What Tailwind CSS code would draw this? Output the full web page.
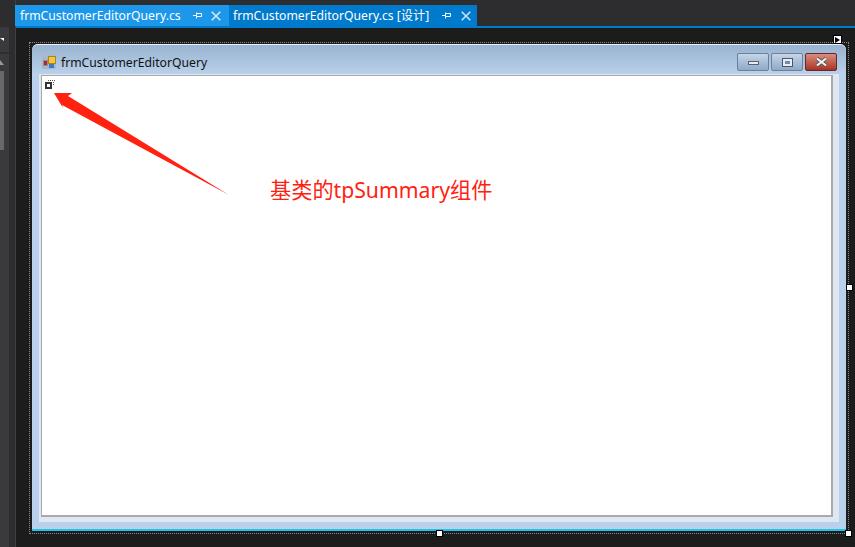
<!DOCTYPE html>
<html lang="en">
<head>
    <meta charset="UTF-8">
    <title>frmCustomerEditorQuery</title>
    <script src="https://cdn.jsdelivr.net/npm/@tailwindcss/browser@4"></script>
</head>
<body class="bg-[#1c1c1c] overflow-hidden">
    <div class="relative w-[855px] h-[547px] flex font-['Noto_Sans','Noto_Sans_CJK_SC',sans-serif]">
        <!-- left tool strip -->
        <div class="w-4 h-full flex shrink-0 border-r border-[#3f3f46] bg-[#2d2d30]">
            <div class="w-[9px] h-full bg-[#3a3a3e] flex flex-col">
                <div class="h-[27px] bg-[#2d2d30]"></div>
                <div class="h-[25px] flex items-start pt-[11px]">
                    <div class="w-0 h-0 border-t-[3px] border-t-white border-l-[4px] border-l-transparent ml-0"></div>
                </div>
                <div class="h-[2px] bg-[#2d2d30]"></div>
                <div class="h-[17px] flex items-start pt-[6px]">
                    <div class="w-0 h-0 border-b-[5px] border-b-[#999999] border-r-[4px] border-r-transparent"></div>
                </div>
                <div class="w-1 h-[79px] bg-[#686868]"></div>
            </div>
        </div>

        <div class="flex-1 flex flex-col min-w-0">
            <!-- tab well -->
            <div class="h-[28px] bg-[#2d2d30] border-b-2 border-[#007acc] flex items-end shrink-0">
                <div class="w-[214px] h-[21px] -ml-px bg-[#1c97ea] text-white text-[12.2px] leading-[21px] flex items-center pl-[5px]">
                    <span class="w-[173px] whitespace-nowrap">frmCustomerEditorQuery.cs</span>
                    <svg class="w-[9px] h-[9px]" viewBox="0 0 9 9" fill="none" stroke="#fff"><path d="M0 4.5h3M3.5 1.5v6M3.5 2.5h5v3h-5"/></svg>
                    <svg class="w-[10px] h-[10px] ml-[9px]" viewBox="0 0 10 10" fill="none" stroke="#d8ecfa" stroke-width="1.5"><path d="M.7.7l8.6 8.6M9.3.7L.7 9.3"/></svg>
                </div>
                <div class="w-[248px] h-[21px] bg-[#007acc] text-white text-[12.2px] leading-[21px] flex items-center pl-[4px]">
                    <span class="w-[209px] whitespace-nowrap">frmCustomerEditorQuery.cs [设计]</span>
                    <svg class="w-[9px] h-[9px]" viewBox="0 0 9 9" fill="none" stroke="#fff"><path d="M0 4.5h3M3.5 1.5v6M3.5 2.5h5v3h-5"/></svg>
                    <svg class="w-[10px] h-[10px] ml-[10px]" viewBox="0 0 10 10" fill="none" stroke="#cfe6f6" stroke-width="1.5"><path d="M.7.7l8.6 8.6M9.3.7L.7 9.3"/></svg>
                </div>
            </div>

            <!-- designer surface -->
            <div class="flex-1 pl-[13px] pt-[14px]">
                <div class="w-[820px] h-[492px] pt-[1px] px-[2px] border border-dotted border-[#8a8a8a]">
                    <!-- form window -->
                    <div class="w-[814px] h-[487px] flex flex-col rounded-t-[6px] border-b-2 border-[#1fc4e8] bg-[#b9d1ea]">
                        <div class="h-[30px] shrink-0 rounded-t-[6px] bg-gradient-to-b from-[#99b3d0] to-[#b9d1ea] border-t border-white/70 flex items-start pt-[8px] pl-[10px] pr-[9px]">
                            <svg class="w-[14px] h-[14px] shrink-0 mt-[2px]" viewBox="0 0 14 14">
                                <rect x="0" y="0" width="14" height="14" fill="#a9b9cc"/>
                                <rect x="1.5" y="5.5" width="4" height="5" fill="#b5262b" stroke="#8f8f8f"/>
                                <rect x="6.5" y="1.5" width="7" height="7" fill="#f5c63c" stroke="#a9852a"/>
                                <rect x="7" y="9" width="5" height="4" fill="#3f78c9"/>
                            </svg>
                            <span class="ml-[5px] mt-[1px] text-[12.2px] leading-[18px] text-[#111111] whitespace-nowrap">frmCustomerEditorQuery</span>
                            <div class="ml-auto flex gap-[2px]">
                                <div class="w-[32px] h-[18px] rounded-[2px] border border-[#6f7f96] bg-gradient-to-b from-[#c4d6ea] to-[#8fa9c6] flex items-center justify-center">
                                    <div class="w-[11px] h-[4px] mt-[2px] bg-[#e8edf3] border border-[#59606b]"></div>
                                </div>
                                <div class="w-[32px] h-[18px] rounded-[2px] border border-[#6f7f96] bg-gradient-to-b from-[#c4d6ea] to-[#8fa9c6] flex items-center justify-center">
                                    <div class="w-[11px] h-[9px] bg-[#e8edf3] border border-[#4f5661] flex items-center justify-center"><div class="w-[5px] h-[3px] bg-[#6d8bb0]"></div></div>
                                </div>
                                <div class="w-[32px] h-[18px] rounded-[2px] border border-[#5e2a34] bg-gradient-to-b from-[#d98c7e] to-[#a8321f] flex items-center justify-center">
                                    <svg class="w-[13px] h-[10px]" viewBox="0 0 13 10" fill="none"><path d="M2 1.5l9 7M11 1.5l-9 7" stroke="#4c5560" stroke-width="3.5"/><path d="M2 1.5l9 7M11 1.5l-9 7" stroke="#f2f2f2" stroke-width="2.2"/></svg>
                                </div>
                            </div>
                        </div>
                        <!-- client area -->
                        <div class="flex-1 ml-[7px] mr-[7px] mb-[7px] pl-[2px] pr-[6px] pt-[1px] pb-[5px] bg-[#dfe7f1]">
                            <div class="w-full h-full bg-white border-t border-l border-r-2 border-b-2 border-[#a8a8b0] pl-[3px] pt-[4px]">
                                <svg class="block w-[10px] h-[9px]" viewBox="0 0 10 9">
                                    <rect x="0" y="2" width="7" height="7" fill="#333333"/>
                                    <rect x="2" y="4" width="3" height="3" fill="#ffffff"/>
                                    <path d="M3 .5h7M8.5 2v3" stroke="#555555" stroke-dasharray="1 1" fill="none"/>
                                </svg>
                            </div>
                        </div>
                    </div>
                </div>
            </div>
        </div>

        <!-- designer handles -->
        <div class="absolute left-[833px] top-[35px] w-[9px] h-[9px] bg-white border border-black flex items-center justify-center">
            <div class="w-0 h-0 border-l-[5px] border-l-black border-y-[3px] border-y-transparent"></div>
        </div>
        <div class="absolute left-[846px] top-[284px] w-[7px] h-[7px] bg-white border border-black"></div>
        <div class="absolute left-[436px] top-[530px] w-[7px] h-[7px] bg-white border border-black"></div>
        <div class="absolute left-[845px] top-[530px] w-[7px] h-[7px] bg-white border border-black"></div>

        <!-- annotation -->
        <svg class="absolute left-0 top-0 w-[855px] h-[547px] pointer-events-none" viewBox="0 0 855 547">
            <path d="M54 93 L72 93 L68 96 L229 195 L62 105 L63 108Z" fill="#ff2211"/>
        </svg>
        <div class="absolute left-[270px] top-[175px] text-[21.2px] leading-[29px] text-[#ff2211] whitespace-nowrap">基类的tpSummary组件</div>
    </div>
</body>
</html>
